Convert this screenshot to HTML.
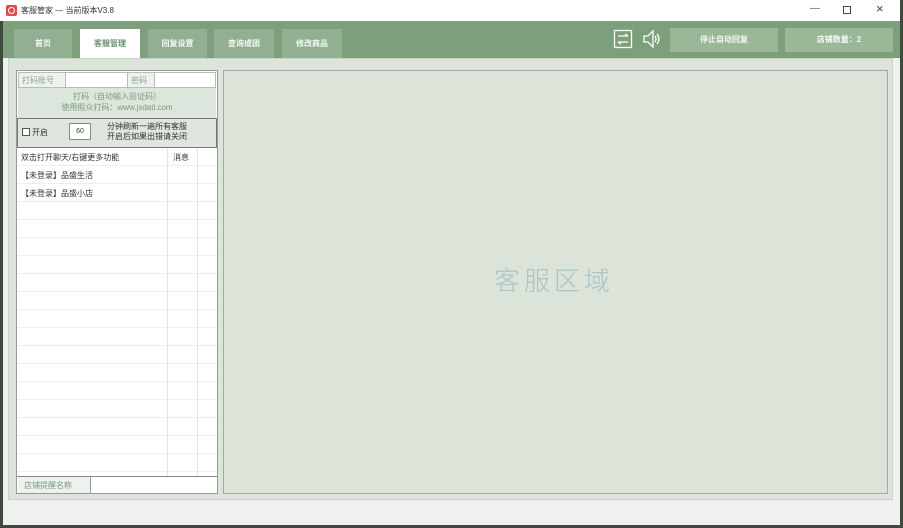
<!DOCTYPE html>
<html><head><meta charset="utf-8"><style>
*{margin:0;padding:0;box-sizing:border-box}
body{width:903px;height:528px;overflow:hidden;background:#3d4a3c;font-family:"Liberation Sans","Noto Sans CJK SC",sans-serif;font-size:8px;color:#444;position:relative}
.abs{position:absolute}
.win{left:3px;top:0;width:897px;height:525px;background:#f0f0f0}
.title{left:0;top:0;width:900px;height:21px;background:#fff}
.bar{left:3px;top:21px;width:897px;height:37px;background:#7d9f7c}
.tab{top:8px;height:29px;background:#92b091;color:#f4f8f4;text-align:center;line-height:29px;font-size:8px;font-weight:bold}
.btn{top:7px;height:24px;background:#9ab798;color:#f6f9f6;text-align:center;line-height:24px;font-size:8px;font-weight:bold}
.content{left:8px;top:58px;width:885px;height:442px;background:#dce4dc;border:1px solid #c8d2c8}
.lp{left:16px;top:70px;width:202px;height:424px;background:#fff;border:1px solid #999}
.rp{left:223px;top:70px;width:665px;height:424px;background:#dce4da;border:1px solid #a0a8a0}
.cell{border:1px solid #bbb}
.g{color:#7a9a79}
.rows{left:0;top:77px;width:200px;height:328px;background:repeating-linear-gradient(to bottom,transparent 0,transparent 17px,#eeeeee 17px,#eeeeee 18px)}
</style></head><body>
<div class="abs win"></div>
<div class="abs title">
 <div class="abs" style="left:6px;top:5px;width:11px;height:11px;background:#e04a4a;border-radius:2px"></div>
 <div class="abs" style="left:8px;top:7px;width:7px;height:7px;border:1.5px solid #fff;border-radius:50%"></div>
 <div class="abs" style="left:21px;top:5px;font-size:8px;color:#333">客服管家 — 当前版本V3.8</div>
 <div class="abs" style="left:810px;top:3px;font-size:10px;color:#555">—</div>
 <div class="abs" style="left:843px;top:6px;width:8px;height:8px;border:1px solid #444"></div>
 <div class="abs" style="left:876px;top:1px;font-size:13px;color:#444">×</div>
</div>
<div class="abs bar">
 <div class="abs tab" style="left:11px;width:58px">首页</div>
 <div class="abs tab" style="left:77px;width:60px;background:#fff;color:#6b8f6a">客服管理</div>
 <div class="abs tab" style="left:145px;width:59px">回复设置</div>
 <div class="abs tab" style="left:211px;width:60px">查询成团</div>
 <div class="abs tab" style="left:279px;width:60px">修改商品</div>
 <svg class="abs" style="left:610px;top:8px" width="20" height="20" viewBox="0 0 20 20" fill="none" stroke="#fff" stroke-width="1.3"><rect x="1.5" y="1.5" width="17" height="17"/><path d="M5 7h10M12 5l3 2M15 13H5M8 15l-3-2"/></svg>
 <svg class="abs" style="left:638px;top:7px" width="22" height="22" viewBox="0 0 22 22" fill="none" stroke="#fff" stroke-width="1.3"><path d="M3 8h4l5-5v16l-5-5H3z"/><path d="M14 8q2 3 0 6M16 6q4 5 0 10"/></svg>
 <div class="abs btn" style="left:667px;width:108px">停止自动回复</div>
 <div class="abs btn" style="left:782px;width:108px">店铺数量：2</div>
</div>
<div class="abs content"></div>
<div class="abs lp">
 <div class="abs cell" style="left:1px;top:1px;width:48px;height:16px;background:#eef2ee;color:#8aa58a;padding:2px 3px">打码账号</div>
 <div class="abs cell" style="left:48px;top:1px;width:63px;height:16px"></div>
 <div class="abs cell" style="left:110px;top:1px;width:28px;height:16px;background:#eef2ee;color:#8aa58a;padding:2px 3px">密码</div>
 <div class="abs cell" style="left:137px;top:1px;width:62px;height:16px"></div>
 <div class="abs g" style="left:1px;top:17px;width:198px;height:30px;background:#dde6dc;text-align:center;line-height:11px;padding-top:3px">打码（自动输入验证码）<br>使用假众打码：www.jsdati.com</div>
 <div class="abs" style="left:0;top:47px;width:200px;height:30px;background:#dfe6de;border:1px solid #777"></div>
 <div class="abs" style="left:5px;top:57px;width:8px;height:8px;border:1px solid #555;background:#fff"></div>
 <div class="abs" style="left:15px;top:56px;color:#333">开启</div>
 <div class="abs" style="left:52px;top:52px;width:22px;height:17px;border:1px solid #888;background:#fff;text-align:center;line-height:15px;font-size:7px">60</div>
 <div class="abs" style="left:90px;top:51px;line-height:10px;color:#333">分钟刷新一遍所有客服<br>开启后如果出错请关闭</div>
 <div class="abs rows"></div>
 <div class="abs" style="left:150px;top:77px;width:1px;height:328px;background:#e4e4e4"></div>
 <div class="abs" style="left:180px;top:77px;width:1px;height:328px;background:#e4e4e4"></div>
 <div class="abs" style="left:4px;top:81px;color:#333">双击打开聊天/右键更多功能</div>
 <div class="abs" style="left:156px;top:81px;color:#333">消息</div>
 <div class="abs" style="left:4px;top:99px;color:#333">【未登录】品盛生活</div>
 <div class="abs" style="left:4px;top:117px;color:#333">【未登录】品盛小店</div>
 <div class="abs" style="left:0;top:405px;width:200px;height:1px;background:#888"></div>
 <div class="abs g" style="left:1px;top:406px;width:73px;height:16px;background:#eef2ee;border-right:1px solid #999;padding:3px 6px">店铺提醒名称</div>
</div>
<div class="abs rp">
 <div class="abs" style="left:270px;top:190px;font-size:26px;color:#a9c3c6;letter-spacing:4px;font-family:'Noto Sans CJK SC',sans-serif;font-weight:300">客服区域</div>
</div>
</body></html>
